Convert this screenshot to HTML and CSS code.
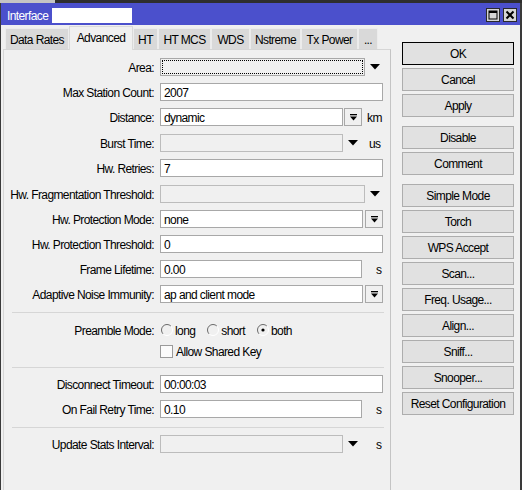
FILE: index.html
```html
<!DOCTYPE html>
<html>
<head>
<meta charset="utf-8">
<link rel="stylesheet" href="styles.css">
</head>
<body>
<div class="topline"></div>
<div class="window">
  <div class="titlebar">
    <span class="title">Interface</span>
    <span class="title-field"></span>
    <span class="spacer"></span>
    <span class="tbtn"><svg width="10" height="10" viewBox="0 0 10 10"><rect x="1" y="1" width="8" height="8" fill="none" stroke="#000" stroke-width="1"/><rect x="1" y="1" width="8" height="2" fill="#000"/></svg></span>
    <span class="tbtn"><svg width="10" height="10" viewBox="0 0 10 10"><path d="M1.5 1.5 L8.5 8.5 M8.5 1.5 L1.5 8.5" stroke="#000" stroke-width="2"/></svg></span>
  </div>
  <div class="main">
    <div class="left">
      <div class="tabs">
        <div class="tab t1">Data Rates</div>
        <div class="tab t2 sel">Advanced</div>
        <div class="tab t3">HT</div>
        <div class="tab t4">HT MCS</div>
        <div class="tab t5">WDS</div>
        <div class="tab t6">Nstreme</div>
        <div class="tab t7">Tx Power</div>
        <div class="tab t8">...</div>
      </div>
      <div class="panel">
        <div class="row">
          <div class="lbl">Area:</div>
          <div class="inp combo w205"><span class="focus"></span></div>
          <span class="arrow"><svg width="10" height="6" viewBox="0 0 10 6"><polygon points="0,0 10,0 5,5.5" fill="#000"/></svg></span>
        </div>
        <div class="row">
          <div class="lbl">Max Station Count:</div>
          <div class="inp w223">2007</div>
        </div>
        <div class="row">
          <div class="lbl">Distance:</div>
          <div class="inp w183">dynamic</div>
          <span class="dbtn ml1"><svg width="9" height="9" viewBox="0 0 9 9"><rect x="1" y="1" width="7" height="1.3" fill="#000"/><polygon points="1,3.5 8,3.5 4.5,7.5" fill="#000"/></svg></span>
          <span class="unit ml5">km</span>
        </div>
        <div class="row mt8">
          <div class="lbl">Burst Time:</div>
          <div class="inp dis w183"></div>
          <span class="arrow"><svg width="10" height="6" viewBox="0 0 10 6"><polygon points="0,0 10,0 5,5.5" fill="#000"/></svg></span>
          <span class="unit ml11">us</span>
        </div>
        <div class="row">
          <div class="lbl">Hw. Retries:</div>
          <div class="inp w223">7</div>
        </div>
        <div class="row mt8">
          <div class="lbl">Hw. Fragmentation Threshold:</div>
          <div class="inp dis w205"></div>
          <span class="arrow"><svg width="10" height="6" viewBox="0 0 10 6"><polygon points="0,0 10,0 5,5.5" fill="#000"/></svg></span>
        </div>
        <div class="row">
          <div class="lbl">Hw. Protection Mode:</div>
          <div class="inp w203">none</div>
          <span class="dbtn ml2"><svg width="9" height="9" viewBox="0 0 9 9"><rect x="1" y="1" width="7" height="1.3" fill="#000"/><polygon points="1,3.5 8,3.5 4.5,7.5" fill="#000"/></svg></span>
        </div>
        <div class="row">
          <div class="lbl">Hw. Protection Threshold:</div>
          <div class="inp w223">0</div>
        </div>
        <div class="row">
          <div class="lbl">Frame Lifetime:</div>
          <div class="inp w202">0.00</div>
          <span class="unit ml14">s</span>
        </div>
        <div class="row">
          <div class="lbl">Adaptive Noise Immunity:</div>
          <div class="inp w203">ap and client mode</div>
          <span class="dbtn ml2"><svg width="9" height="9" viewBox="0 0 9 9"><rect x="1" y="1" width="7" height="1.3" fill="#000"/><polygon points="1,3.5 8,3.5 4.5,7.5" fill="#000"/></svg></span>
        </div>
        <div class="sep sep1"></div>
        <div class="row mt8">
          <div class="lbl">Preamble Mode:</div>
          <span class="radio"><svg width="12" height="12" viewBox="0 0 12 12"><path d="M2.1 9.9 A5.5 5.5 0 0 1 9.9 2.1" fill="none" stroke="#6a6a6a" stroke-width="1"/><path d="M9.9 2.1 A5.5 5.5 0 0 1 2.1 9.9" fill="none" stroke="#ffffff" stroke-width="1"/></svg></span>
          <span class="rlabel">long</span>
          <span class="radio"><svg width="12" height="12" viewBox="0 0 12 12"><path d="M2.1 9.9 A5.5 5.5 0 0 1 9.9 2.1" fill="none" stroke="#6a6a6a" stroke-width="1"/><path d="M9.9 2.1 A5.5 5.5 0 0 1 2.1 9.9" fill="none" stroke="#ffffff" stroke-width="1"/></svg></span>
          <span class="rlabel">short</span>
          <span class="radio"><svg width="12" height="12" viewBox="0 0 12 12"><path d="M2.1 9.9 A5.5 5.5 0 0 1 9.9 2.1" fill="none" stroke="#6a6a6a" stroke-width="1"/><path d="M9.9 2.1 A5.5 5.5 0 0 1 2.1 9.9" fill="none" stroke="#ffffff" stroke-width="1"/><circle cx="6" cy="6" r="1.6" fill="#000"/></svg></span>
          <span class="rlabel">both</span>
        </div>
        <div class="row mt3">
          <div class="lbl"></div>
          <span class="check"></span>
          <span class="clabel">Allow Shared Key</span>
        </div>
        <div class="sep"></div>
        <div class="row">
          <div class="lbl">Disconnect Timeout:</div>
          <div class="inp w223">00:00:03</div>
        </div>
        <div class="row">
          <div class="lbl">On Fail Retry Time:</div>
          <div class="inp w202">0.10</div>
          <span class="unit ml14">s</span>
        </div>
        <div class="sep sep1"></div>
        <div class="row">
          <div class="lbl">Update Stats Interval:</div>
          <div class="inp dis w183"></div>
          <span class="arrow"><svg width="10" height="6" viewBox="0 0 10 6"><polygon points="0,0 10,0 5,5.5" fill="#000"/></svg></span>
          <span class="unit ml18">s</span>
        </div>
      </div>
    </div>
    <div class="buttons">
      <div class="btn default">OK</div>
      <div class="btn">Cancel</div>
      <div class="btn">Apply</div>
      <div class="btn gap">Disable</div>
      <div class="btn">Comment</div>
      <div class="btn gap">Simple Mode</div>
      <div class="btn">Torch</div>
      <div class="btn">WPS Accept</div>
      <div class="btn">Scan...</div>
      <div class="btn">Freq. Usage...</div>
      <div class="btn">Align...</div>
      <div class="btn">Sniff...</div>
      <div class="btn">Snooper...</div>
      <div class="btn">Reset Configuration</div>
    </div>
  </div>
</div>
</body>
</html>
```

FILE: styles.css
```css
* { box-sizing: border-box; }
html, body { margin: 0; padding: 0; }
body {
  width: 522px;
  height: 490px;
  overflow: hidden;
  background: #f0f0f0;
  font-family: "Liberation Sans", Arial, sans-serif;
  font-size: 12px;
  letter-spacing: -0.6px;
  color: #000;
}
.topline {
  height: 3px;
  background: linear-gradient(to right, #c4c4c4 55px, #2e2e2e 55px);
}
.window {
  height: 487px;
  border-left: 1px solid #3a3a3a;
  border-right: 2px solid #3a3a3a;
  display: flex;
  flex-direction: column;
}
.titlebar {
  height: 22px;
  background: #4b50cc;
  display: flex;
  align-items: center;
  padding: 0 3px 0 6px;
  color: #fff;
}
.title { line-height: 14px; margin-top: 3px; }
.title-field {
  width: 80px;
  height: 15px;
  background: #fff;
  margin-left: 4px;
  margin-top: 3px;
}
.spacer { flex: 1; }
.tbtn {
  width: 14px;
  height: 14px;
  margin-left: 3px;
  background: #d6d6d6;
  border: 1px solid #2a2a2a;
  display: flex;
  align-items: center;
  justify-content: center;
  margin-top: 2px;
}
.main {
  flex: 1;
  display: flex;
  min-height: 0;
}
.left {
  width: 390px;
  display: flex;
  flex-direction: column;
}
.tabs {
  height: 24px;
  display: flex;
  align-items: flex-end;
  padding-left: 4px;
  position: relative;
  z-index: 1;
}
.tab {
  height: 21px;
  background: #d9d9d9;
  border: 1px solid #ececec;
  border-bottom: none;
  display: flex;
  align-items: center;
  justify-content: center;
  padding-top: 2px;
}
.tab.sel {
  height: 24px;
  background: #f0f0f0;
  border-color: #dadada;
  margin-bottom: -1px;
  padding-top: 0;
  padding-bottom: 2px;
}
.t1 { width: 64px; }
.t2 { width: 64px; }
.t3 { width: 25px; }
.t4 { width: 53px; }
.t5 { width: 39px; }
.t6 { width: 51px; }
.t7 { width: 57px; }
.t8 { width: 20px; }
.panel {
  flex: 1;
  margin-left: 2px;
  width: 388px;
  border: 1px solid #d6d6d6;
  border-right-color: #c4c4c4;
  border-bottom: none;
  background: #f0f0f0;
  padding-top: 8px;
  display: flex;
  flex-direction: column;
}
.row {
  height: 18px;
  display: flex;
  align-items: center;
  margin-top: 7px;
  flex-shrink: 0;
}
.row:first-child { margin-top: 0; }
.row.mt8 { margin-top: 8px; }
.row.mt3 { margin-top: 3px; }
.lbl {
  width: 156px;
  padding-right: 6px;
  padding-top: 1px;
  text-align: right;
  white-space: nowrap;
}
.inp {
  height: 18px;
  border: 1px solid #a8a8a8;
  background: #fff;
  padding-left: 3px;
  padding-top: 1px;
  display: flex;
  align-items: center;
  white-space: nowrap;
  position: relative;
}
.inp.dis { background: #f0f0f0; border-color: #bcbcbc; }
.inp.combo { background: #f0f0f0; border-color: #a8a8a8; padding: 1px; }
.focus {
  display: block;
  width: 100%;
  height: 100%;
  border: 1px dotted #000;
}
.w223 { width: 223px; }
.w205 { width: 205px; }
.w203 { width: 203px; }
.w202 { width: 202px; }
.w183 { width: 183px; }
.arrow {
  margin-left: 5px;
  width: 10px;
  height: 6px;
  display: flex;
}
.unit { padding-top: 1px; }
.dbtn {
  width: 18px;
  height: 18px;
  border: 1px solid #a8a8a8;
  background: #f0f0f0;
  display: flex;
  align-items: center;
  justify-content: center;
}
.ml1 { margin-left: 1px; }
.ml2 { margin-left: 2px; }
.ml5 { margin-left: 5px; }
.ml11 { margin-left: 11px; }
.ml14 { margin-left: 14px; }
.ml18 { margin-left: 18px; }
.sep {
  height: 1px;
  background: #d6d6d6;
  margin: 7px 0 0 8px;
  width: 372px;
  flex-shrink: 0;
}
.sep.sep1 { margin-top: 9px; }
.radio {
  width: 12px;
  height: 12px;
  display: flex;
  margin-left: 1px;
}
.rlabel { margin-left: 2px; margin-right: 11px; padding-top: 1px; }
.check {
  width: 13px;
  height: 13px;
  border: 1px solid #9a9a9a;
  background: #fbfbfb;
}
.clabel { margin-left: 3px; padding-top: 1px; }
.buttons {
  margin-left: 11px;
  padding-top: 17px;
  width: 112px;
  display: flex;
  flex-direction: column;
  gap: 3px;
}
.btn {
  height: 23px;
  border: 1px solid #adadad;
  background: #e1e1e1;
  display: flex;
  align-items: center;
  justify-content: center;
  white-space: nowrap;
  padding-top: 1px;
}
.btn.default { border-color: #000; }
.btn.gap { margin-top: 6px; }
```
